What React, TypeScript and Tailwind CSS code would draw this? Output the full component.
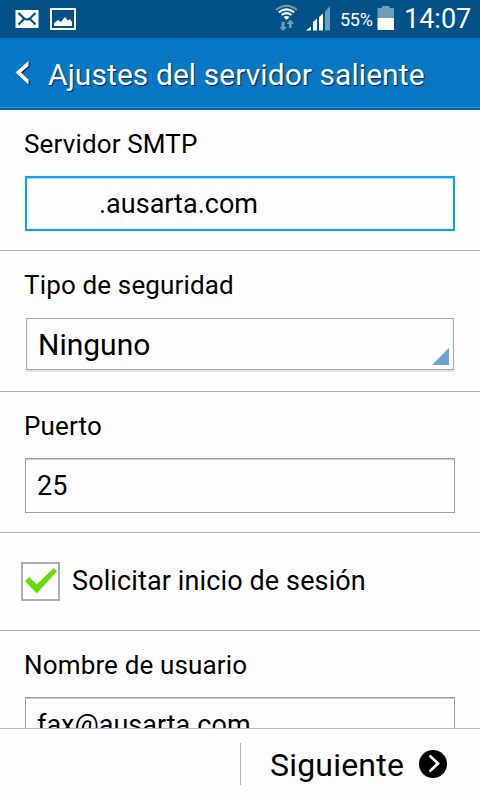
import React from 'react';

type FieldProps = {
    label: string;
    children: React.ReactNode;
};

const Field = ({ label, children }: FieldProps) => (
    <section className="h-[141px] shrink-0 border-b border-[#b2b2b2] px-[25px] pt-[18px]">
        <label className="-ml-px block h-12 text-[26px] leading-8 tracking-[0.15px] whitespace-nowrap">{label}</label>
        {children}
    </section>
);

const TextBox = ({ value }: { value: string }) => (
    <div className="flex h-[55px] items-center border border-[#9d9fa1] pt-0.5 pl-[11px] text-[27px] whitespace-nowrap shadow-[inset_0_1px_0_#cfcfcf]">
        {value}
    </div>
);

const StatusBar = () => (
    <div className="flex h-[38px] shrink-0 items-center bg-[#035287] text-white">
        <svg className="ml-[15px]" width="24" height="38" viewBox="0 0 24 38">
            <rect x="0.5" y="10" width="23" height="18" fill="#fff" />
            <path d="M3.5 13 L9 18.5 Q12 20.5 15 18.5 L20.5 13 M3.5 24.5 L8.5 19.5 M20.5 24.5 L15.5 19.5" fill="none" stroke="#035287" strokeWidth="2.2" />
        </svg>
        <svg className="ml-[11px]" width="26" height="38" viewBox="0 0 26 38">
            <rect x="1" y="9" width="24" height="20" fill="none" stroke="#fff" strokeWidth="2" />
            <path d="M4 26 V23 L8 20 L11 22 L15 17 L18 20.5 L20 19 L22 22 V26 Z" fill="#fff" />
        </svg>
        <svg className="ml-[199px]" width="24" height="38" viewBox="0 0 24 38">
            <g fill="none" strokeWidth="2">
                <path d="M1 10 Q11.5 1.5 22 10" stroke="#6f9cbb" />
                <path d="M3.8 12.4 Q11.5 6.4 19.2 12.4" stroke="#fff" />
                <path d="M6.5 15 Q11.5 11.2 16.5 15" stroke="#fff" />
            </g>
            <path d="M8.5 17 Q11.5 14.8 14.5 17 L11.5 20 Z" fill="#fff" />
            <path d="M6.5 22 H9.5 V27 H12 L8 31 L4.5 27 H6.5 Z M14 28 V24 H11.5 L15.3 19.5 L19 24 H16.5 V28 Z" fill="#6f9cbb" />
        </svg>
        <svg className="ml-[7px]" width="25" height="38" viewBox="0 0 25 38">
            <path d="M0 30.5 L5 26.5 V30.5 Z M7 30.5 V22 L11 18.5 V30.5 Z M13 30.5 V17 L17 13.5 V30.5 Z" fill="#fff" />
            <path d="M19 30.5 V11.5 L24 6 V30.5 Z" fill="#6f9cbb" />
        </svg>
        <span className="ml-[9px] w-[33px] pt-px text-[18px] tracking-[-0.3px]">55%</span>
        <svg className="ml-[4px]" width="18" height="38" viewBox="0 0 18 38">
            <path d="M0.5 8 H5 V6 H12.5 V8 H17 V18 H0.5 Z" fill="#6f9cbb" />
            <rect x="0.5" y="18" width="16.5" height="12" fill="#fff" />
        </svg>
        <span className="ml-[9px] text-[27px] leading-[38px]">14:07</span>
    </div>
);

const TitleBar = () => (
    <header className="flex h-[72px] shrink-0 items-center border-b-2 border-[#0560a8] bg-[#0677c4] text-white shadow-[inset_0_-1px_0_#2b8fd6]">
        <svg className="ml-[15px] drop-shadow-[1px_1px_0_#123]" width="15" height="26" viewBox="0 0 15 26">
            <path d="M13.5 1 V6 L6 12.5 L13.5 19.5 V24.5 L0.5 12.5 Z" fill="#fff" />
        </svg>
        <h1 className="ml-[18px] pt-[3px] text-[30px] leading-9 tracking-[0.06px] whitespace-nowrap [text-shadow:1px_1px_1px_#123]">
            Ajustes del servidor saliente
        </h1>
    </header>
);

export default function App() {
    return (
        <div className="flex h-[800px] w-[480px] flex-col overflow-hidden bg-[#fdfdfd] font-['Roboto',sans-serif] text-black">
            <StatusBar />
            <TitleBar />

            <main className="flex h-[618px] shrink-0 flex-col overflow-hidden">
                <Field label="Servidor SMTP">
                    <div className="flex h-[55px] items-center border-2 border-[#05a5fc] pt-0.5 pl-[72px] text-[27px] shadow-[inset_0_1px_0_#cfcfcf]">
                        .ausarta.com
                    </div>
                </Field>

                <Field label="Tipo de seguridad">
                    <div className="mx-px mt-px flex h-[52px] items-end justify-between border border-[#a9a9a9] pl-[11px] pr-1 shadow-[0_2px_0_#e3e3e3]">
                        <span className="self-center pt-px text-[30px] leading-9">Ninguno</span>
                        <svg className="mb-1" width="17" height="17" viewBox="0 0 17 17">
                            <path d="M17 0 V17 H0 Z" fill="#6c9fd2" />
                        </svg>
                    </div>
                </Field>

                <Field label="Puerto">
                    <TextBox value="25" />
                </Field>

                <section className="flex h-[98px] shrink-0 items-center border-b border-[#b2b2b2] pl-[21px]">
                    <div className="flex size-[39px] items-center justify-center border-2 border-[#acb0b1]">
                        <svg width="35" height="35" viewBox="0 0 35 35">
                            <path d="M2 17 L6.2 13 L13.7 20.5 L30.7 4 L34 7.3 L13.7 29.5 Z" fill="#5fdf05" />
                        </svg>
                    </div>
                    <span className="ml-3 text-[27px] tracking-[0.12px] whitespace-nowrap">Solicitar inicio de sesión</span>
                </section>

                <Field label="Nombre de usuario">
                    <TextBox value="fax@ausarta.com" />
                </Field>
            </main>

            <footer className="flex h-[72px] shrink-0 items-center border-t border-[#b8b8b8] pb-0.5">
                <div className="ml-[240px] h-[42px] w-px bg-[#b2b2b2]" />
                <span className="ml-[29px] w-[134px] pt-0.5 text-[32px] leading-10 tracking-[0.2px]">Siguiente</span>
                <svg className="ml-[15px]" width="28" height="28" viewBox="0 0 28 28">
                    <circle cx="14" cy="14" r="14" fill="#000" />
                    <path d="M10.5 5.5 L19 13.5 L10.5 21.5" fill="none" stroke="#fff" strokeWidth="2.6" />
                </svg>
            </footer>
        </div>
    );
}
